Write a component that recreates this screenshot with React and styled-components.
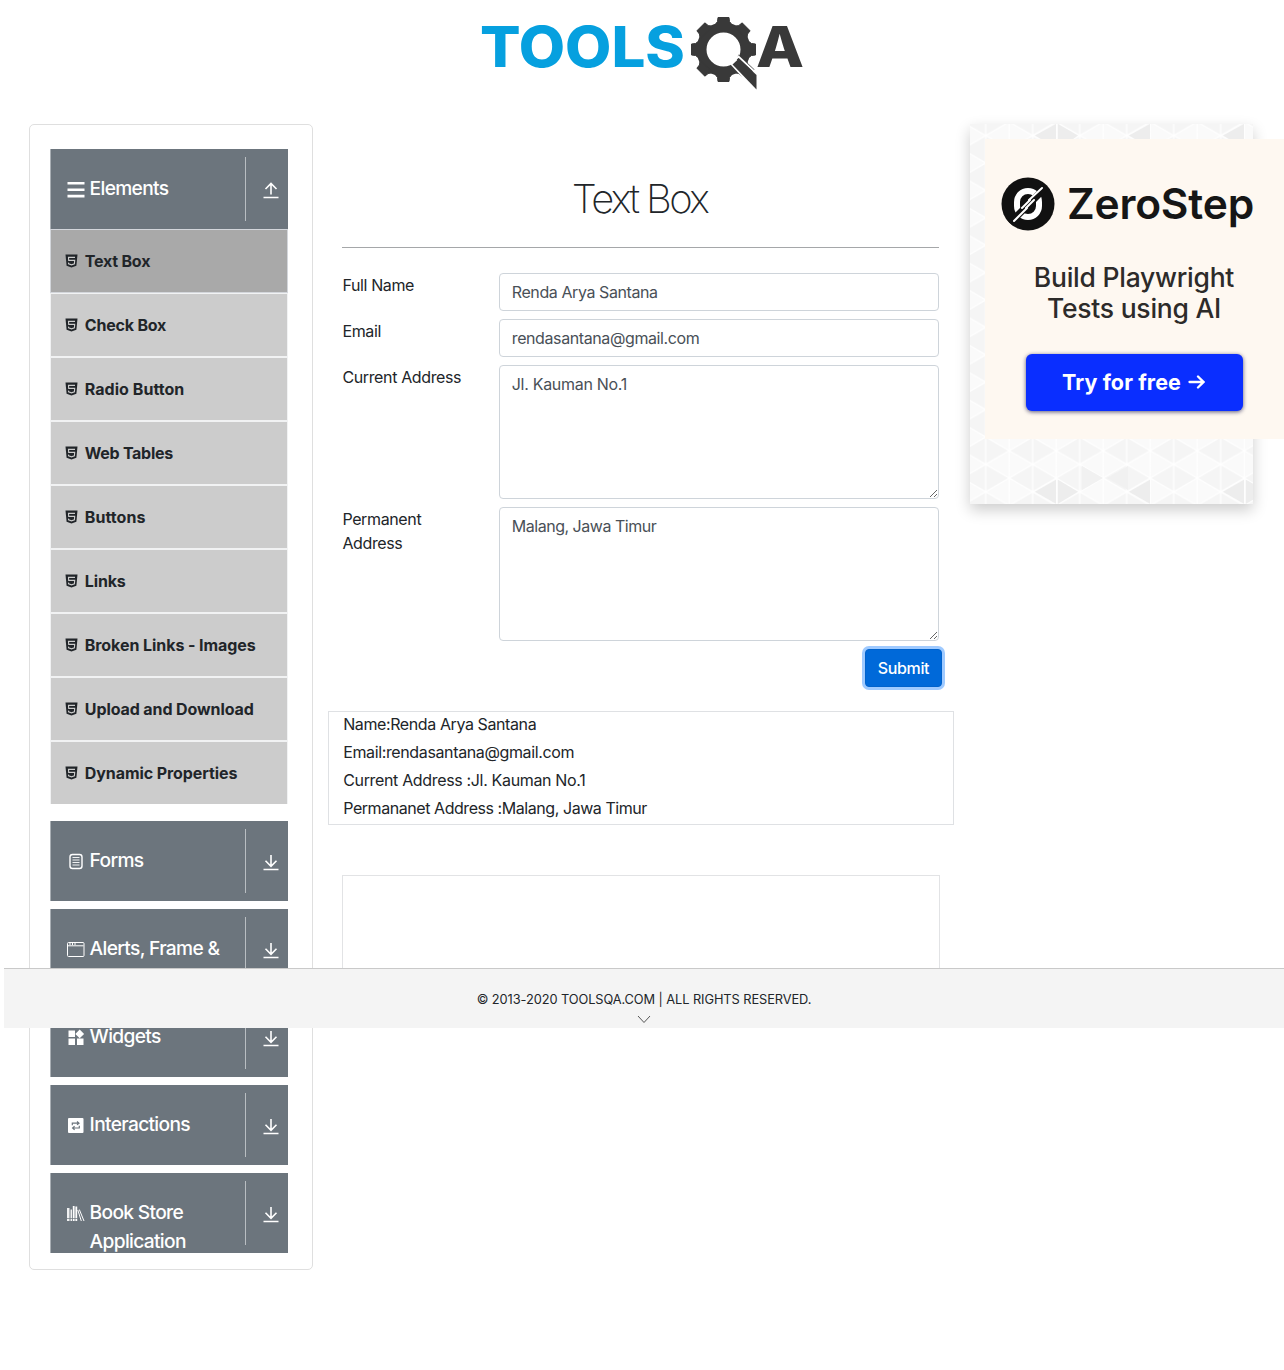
import React from "react";
import styled, { createGlobalStyle } from "styled-components";

const Global = createGlobalStyle`
  *, *::before, *::after { box-sizing: border-box; }
  body { margin: 0; background: #fff; color: #212529; font: 400 16px/1.5 Inter, "Liberation Sans", sans-serif; overflow: hidden; }
`;

const Page = styled.div`width: 1284px; height: 1370px; position: relative; overflow: hidden;`;
const Header = styled.header`height: 124px; padding: 13px 0 0 480px;`;
const Columns = styled.div`display: flex; align-items: flex-start; padding-left: 29px;`;

const Sidebar = styled.aside`
  width: 284px; height: 1146px; border: 1px solid #dfdfdf; border-radius: 5px; padding: 24px 20px 0;
`;
const Group = styled.section`margin-bottom: ${(p) => (p.$open ? 17 : 8)}px;`;
const GroupHead = styled.div`
  width: 238px; height: 80px; display: flex; background: #6c757d; color: #fff;
  border-left: 1px solid #a9afb4; overflow: hidden;
`;
const GroupLabel = styled.div`
  flex: 1; display: flex; padding: 25px 0 0 15px; font-size: 19.2px; line-height: 29px; gap: 4.6px;
  font-weight: 450; letter-spacing: -0.68px;
`;
const IconSlot = styled.span`width: 19px; height: 31px; display: flex; align-items: center; justify-content: center; flex: none;`;
const Toggle = styled.div`
  width: 43px; height: 64px; margin-top: 8px; border-left: 1px solid #b9bec2;
  display: flex; align-items: center; justify-content: center; padding: ${(p) => (p.$up ? 3 : 2)}px 0 0 8px;
`;
const Item = styled.div`
  width: 238px; height: ${(p) => (p.$last ? 63 : 64)}px; padding-left: 14px; display: flex; align-items: center; gap: 6.8px;
  background: ${(p) => (p.$active ? "#a9a9a9" : "#ccc")};
  border: solid ${(p) => (p.$active ? "#d3d6db" : "#f1f2f3")}; border-width: ${(p) => (p.$last ? "1px 1px 0" : "1px")};
  font-weight: 700; letter-spacing: ${(p) => p.$ls}px;
`;

const Main = styled.main`width: 627px; margin-left: 14px; padding-top: 49px;`;
const Inner = styled.div`padding: 0 15px;`;
const Title = styled.h1`
  margin: 0; height: 75px; border-bottom: 1px solid #a5a7a9; text-align: center; padding-right: 2px;
  font-size: 40px; line-height: 52px; font-weight: 200; letter-spacing: -2.6px;
`;
const Form = styled.form`padding-top: 25px;`;
const Row = styled.div`display: flex; margin-bottom: 8px;`;
const Label = styled.label`width: 157px; padding: 0 37px 0 0.4px; letter-spacing: -0.37px;`;
const field = `
  display: block; width: 441px; margin: 0; padding: 6px 12px; border: 1px solid #ced4da; border-radius: 4px; background: #fff;
  color: #495057; font: inherit; outline: none;
`;
const Input = styled.input`${field} height: 38px; letter-spacing: ${(p) => p.$ls}px;`;
const Area = styled.textarea`${field} height: 134px; resize: vertical; overflow: hidden; letter-spacing: ${(p) => p.$ls}px;`;
const Actions = styled.div`display: flex; justify-content: flex-end; margin-right: -3px;`;
const Submit = styled.button`
  width: 77px; height: 38px; border: 1px solid #0062cc; border-radius: 4px; background: #0069d9; color: #fff;
  padding: 0; font: inherit; font-weight: 450; letter-spacing: -0.35px; box-shadow: 0 0 0 3px #9fcaff;
`;
const Output = styled.div`height: 114px; margin-top: 24px; margin-left: 1px; padding-left: 14.2px; border: 1px solid #dfe1e4;`;
const Line = styled.p`margin: 0 0 4px; letter-spacing: ${(p) => p.$ls}px;`;
const Frame = styled.div`margin: 50px 14px 0 15px; height: 120px; border: 1px solid #e2e3e5;`;

const AdPanel = styled.aside`
  width: 283px; height: 380px; margin-left: 16px; padding: 15px 0 0 15px; flex: none; position: relative;
  box-shadow: 0 6px 14px rgba(0,0,0,.2);
`;
const Pattern = styled.svg`position: absolute; inset: 0; display: block;`;
const Ad = styled.div`position: relative; width: 300px; height: 300px; background: #fef8f1; padding-top: 36px; color: #161616;`;
const Brand = styled.div`display: flex; align-items: center; gap: 12px; padding-left: 16px; height: 58px;`;
const BrandName = styled.span`font-size: 42.5px; font-weight: 600; line-height: 58px; letter-spacing: -.2px; white-space: nowrap;`;
const Pitch = styled.div`margin: 29px 2px 0 0; text-align: center; font-size: 26.5px; line-height: 31px; font-weight: 500; letter-spacing: -.25px; color: #2d2b2a;`;
const Cta = styled.div`
  width: 217px; height: 57px; margin: 30px 0 0 41px; border-radius: 6px; background: #0a2eff; color: #fff; box-shadow: 0 1px 4px rgba(0,0,60,.65);
  font-size: 21.5px; line-height: 54px; font-weight: 700; letter-spacing: .1px;
  display: flex; align-items: center; justify-content: center; gap: 7px; padding: 0 2px 1px 0;
`;

const Footer = styled.footer`
  position: absolute; left: 4px; right: 0; top: 968px; height: 60px; background: #f4f4f4; border-top: 1px solid #c9c9c9;
  display: flex; flex-direction: column; align-items: center; gap: 5px; padding-top: 21px; font-size: 12.8px; line-height: 20px; letter-spacing: -.07px;
`;

const Logo = () => (
  <svg width="326" height="80" viewBox="480 13 326 80" fontFamily="Inter, sans-serif" fontWeight="800">
    <text x="480" y="67" fontSize="56" fill="#06a0df" textLength="205" lengthAdjust="spacingAndGlyphs">TOOLS</text>
    <g transform="translate(723.5 49.5)">
      <circle r="22" fill="none" stroke="#393939" strokeWidth="10" />
      {[0, 45, 90, 135, 180, 225, 270, 315].map((a) => (
        <path key={a} transform={`rotate(${a})`} d="M-9-24L-6-28L-5.5-32H5.5L6-28L9-24Z" fill="#393939" stroke="#393939" strokeLinejoin="round" />
      ))}
      <path d="M7 15L15 6L36 25V44L30 40Z" fill="#fff" />
      <path d="M15 5L31 20L27 24L13 10Z" fill="#393939" />
      <path d="M9.500 12.500L15 7L34 25" fill="none" stroke="#fff" strokeWidth="1.800" />
      <path d="M9 15L15.500 9L33 25.500V40Z" fill="#393939" />
    </g>
    <text x="756" y="67" fontSize="56" fill="#393939" textLength="48" lengthAdjust="spacingAndGlyphs">A</text>
  </svg>
);

const icons = {
  menu: <path d="M1.500 3.300h17M1.500 9.700h17M1.500 16.100h17" stroke="#fff" strokeWidth="2.600" />,
  form: <><rect x="4" y="2.500" width="12" height="14" rx="2.500" fill="none" stroke="#fff" strokeWidth="1.400" /><path d="M6.5 5.500h7M6.5 8h7M6.5 10.500h7M6.5 13h7" stroke="#fff" strokeWidth=".9" /></>,
  window: <><rect x="1.5" y="2.500" width="16.500" height="14" rx="1" fill="none" stroke="#fff" /><path d="M1.5 5.800h16M4 3v2M6.5 3v2M9 3v2" stroke="#fff" /></>,
  widgets: <path d="M2.500 2.500h6.5v6.500H2.500zM2.500 10.500h6.500v6.500H2.500zM11 10.500h6.500v6.500H11zM13.700 1.500l4.400 4.400-4.400 4.400-4.400-4.400z" fill="#fff" />,
  loop: <><rect x="2" y="2" width="15.5" height="15" rx="1" fill="#fff" /><path d="M6.300 9.300V7.200h6M11 5.500l2 1.700-2 1.700M13.300 9.700v2.300H7M8.600 10.300l-2 1.700 2 1.700" fill="none" stroke="#6c757d" strokeWidth="1.200" /></>,
  books: <><path d="M1 4h2.500v13H1zM4.500 5.500H6V17H4.500z" fill="#fff" opacity=".9" /><path d="M7.700 2v15M10.300 2.500v14.500" fill="none" stroke="#fff" strokeWidth="1.800" /><path d="M11.800 6l3.500 11M13.300 5.500L18 17" fill="none" stroke="#fff" strokeWidth="1" /><path d="M1 14.500h11" stroke="#6c757d" strokeWidth=".7" /></>,
};
const Icon = ({ name }) => <svg width="19" height="19" viewBox="0 0 19 19">{icons[name]}</svg>;
const Arrow = ({ up }) => (
  <svg width="16" height="17" viewBox="0 0 16 17" fill="none" stroke="#fff" strokeWidth="1.6">
    <path d={up ? "M8 12.5V1.5M2.5 7L8 1.5 13.5 7M.5 15.500h15" : "M8 1v11M2.5 6.800L8 12.300l5.500-5.500M.5 15.500h15"} />
  </svg>
);
const Shield = () => (
  <svg width="13" height="14" viewBox="0 0 13 14">
    <path d="M.5.5h12l-1.100 11.300-4.900 1.700-4.900-1.700z" fill="#212529" />
    <path d="M10 3.400H3.500l.2 3h6l-.3 3.500-2.900.9-2.900-.9-.1-1.300" fill="none" stroke="#ccc" strokeWidth="1.100" />
  </svg>
);
const Step = () => (
  <svg width="54" height="54" viewBox="0 0 54 54">
    <circle cx="27" cy="27" r="26.500" fill="#111" />
    <rect x="16" y="14" width="22" height="26" rx="11" fill="none" stroke="#fff" strokeWidth="6" />
    <path d="M9 46L43 12" stroke="#111" strokeWidth="7" />
    <path d="M13 44L26 31M21 31l8-8M25 31l8-8M28 23l13-12" stroke="#fff" strokeWidth="2" strokeLinecap="round" />
  </svg>
);

const items = [
  ["Text Box", -0.22], ["Check Box", -0.2], ["Radio Button", 0.04], ["Web Tables", -0.28], ["Buttons", 0.05], ["Links", -0.15],
  ["Broken Links - Images", -0.07], ["Upload and Download", -0.1], ["Dynamic Properties", -0.08],
];
const groups = [["Forms", "form"], ["Alerts, Frame & Windows", "window"], ["Widgets", "widgets"], ["Interactions", "loop"], ["Book Store Application", "books"]];

function Head({ label, icon, up }) {
  return (
    <GroupHead>
      <GroupLabel><IconSlot><Icon name={icon} /></IconSlot><span>{label}</span></GroupLabel>
      <Toggle $up={up}><Arrow up={up} /></Toggle>
    </GroupHead>
  );
}

export default function App() {
  return (
    <Page>
      <Global />
      <Header><Logo /></Header>
      <Columns>
        <Sidebar>
          <Group $open>
            <Head label="Elements" icon="menu" up />
            {items.map(([t, ls], i) => (
              <Item key={t} $active={i === 0} $last={i === items.length - 1} $ls={ls}><Shield /><span>{t}</span></Item>
            ))}
          </Group>
          {groups.map(([t, ic]) => <Group key={t}><Head label={t} icon={ic} /></Group>)}
        </Sidebar>
        <Main>
          <Inner>
            <Title>Text Box</Title>
            <Form>
              <Row><Label>Full Name</Label><Input $ls={-0.41} defaultValue="Renda Arya Santana" /></Row>
              <Row><Label>Email</Label><Input $ls={-0.4} defaultValue="rendasantana@gmail.com" /></Row>
              <Row><Label>Current Address</Label><Area $ls={-0.3} defaultValue="Jl. Kauman No.1" /></Row>
              <Row><Label>Permanent Address</Label><Area $ls={-0.48} defaultValue="Malang, Jawa Timur" /></Row>
              <Actions><Submit type="button">Submit</Submit></Actions>
            </Form>
          </Inner>
          <Output>
            <Line $ls={-0.4}>Name:Renda Arya Santana</Line>
            <Line $ls={-0.37}>Email:rendasantana@gmail.com</Line>
            <Line $ls={-0.34}>Current Address :Jl. Kauman No.1</Line>
            <Line $ls={-0.44}>Permananet Address :Malang, Jawa Timur</Line>
          </Output>
          <Frame />
        </Main>
        <AdPanel>
          <Pattern width="283" height="380">
            <defs>
              <pattern id="tri" width="47" height="27.4" patternUnits="userSpaceOnUse" patternTransform="translate(15.7 11.6)">
                <rect width="47" height="27.4" fill="#fafafa" />
                <path d="M0 0l23.500 13.700L0 27.400zM23.500 13.700L47 0v27.400z" fill="#f5f5f5" />
                <path d="M0 0l47 27.400M47 0L0 27.400M0 0v27.400M23.500 0v27.400M47 0v27.400" stroke="#fff" strokeWidth="1.300" fill="none" />
              </pattern>
            </defs>
            <rect width="283" height="380" fill="url(#tri)" />
            <path d="M65 367.800l21-12v24zM88 355.800l20 12-20 12zM159 367.800l21-12v24zM253 367.800l21-12v24zM276 355.800l7 4v16l-7 4zM65 11.600L86 0v15H71zM88 0l20 11.600-5 3.400H88zM159 11.600L180 0v15h-15zM253 11.600L274 0v15h-15z" fill="#ededed" />
            <path d="M112 342l21 12-21 12zM137 354l21-12v24z" fill="#f1f1f1" />
          </Pattern>
          <Ad>
            <Brand><Step /><BrandName>ZeroStep</BrandName></Brand>
            <Pitch>Build Playwright<br />Tests using AI</Pitch>
            <Cta><span>Try for free</span>
              <svg width="17" height="16" viewBox="0 0 17 16" fill="none" stroke="#fff" strokeWidth="2.300" strokeLinecap="round"><path d="M1.500 8h14M10 2.500L15.500 8 10 13.500" /></svg>
            </Cta>
          </Ad>
        </AdPanel>
      </Columns>
      <Footer>
        <span>© 2013-2020 TOOLSQA.COM | ALL RIGHTS RESERVED.</span>
        <svg width="14" height="9" viewBox="0 0 14 9"><path d="M1 1l6 6.500L13 1" fill="none" stroke="#555" /></svg>
      </Footer>
    </Page>
  );
}
